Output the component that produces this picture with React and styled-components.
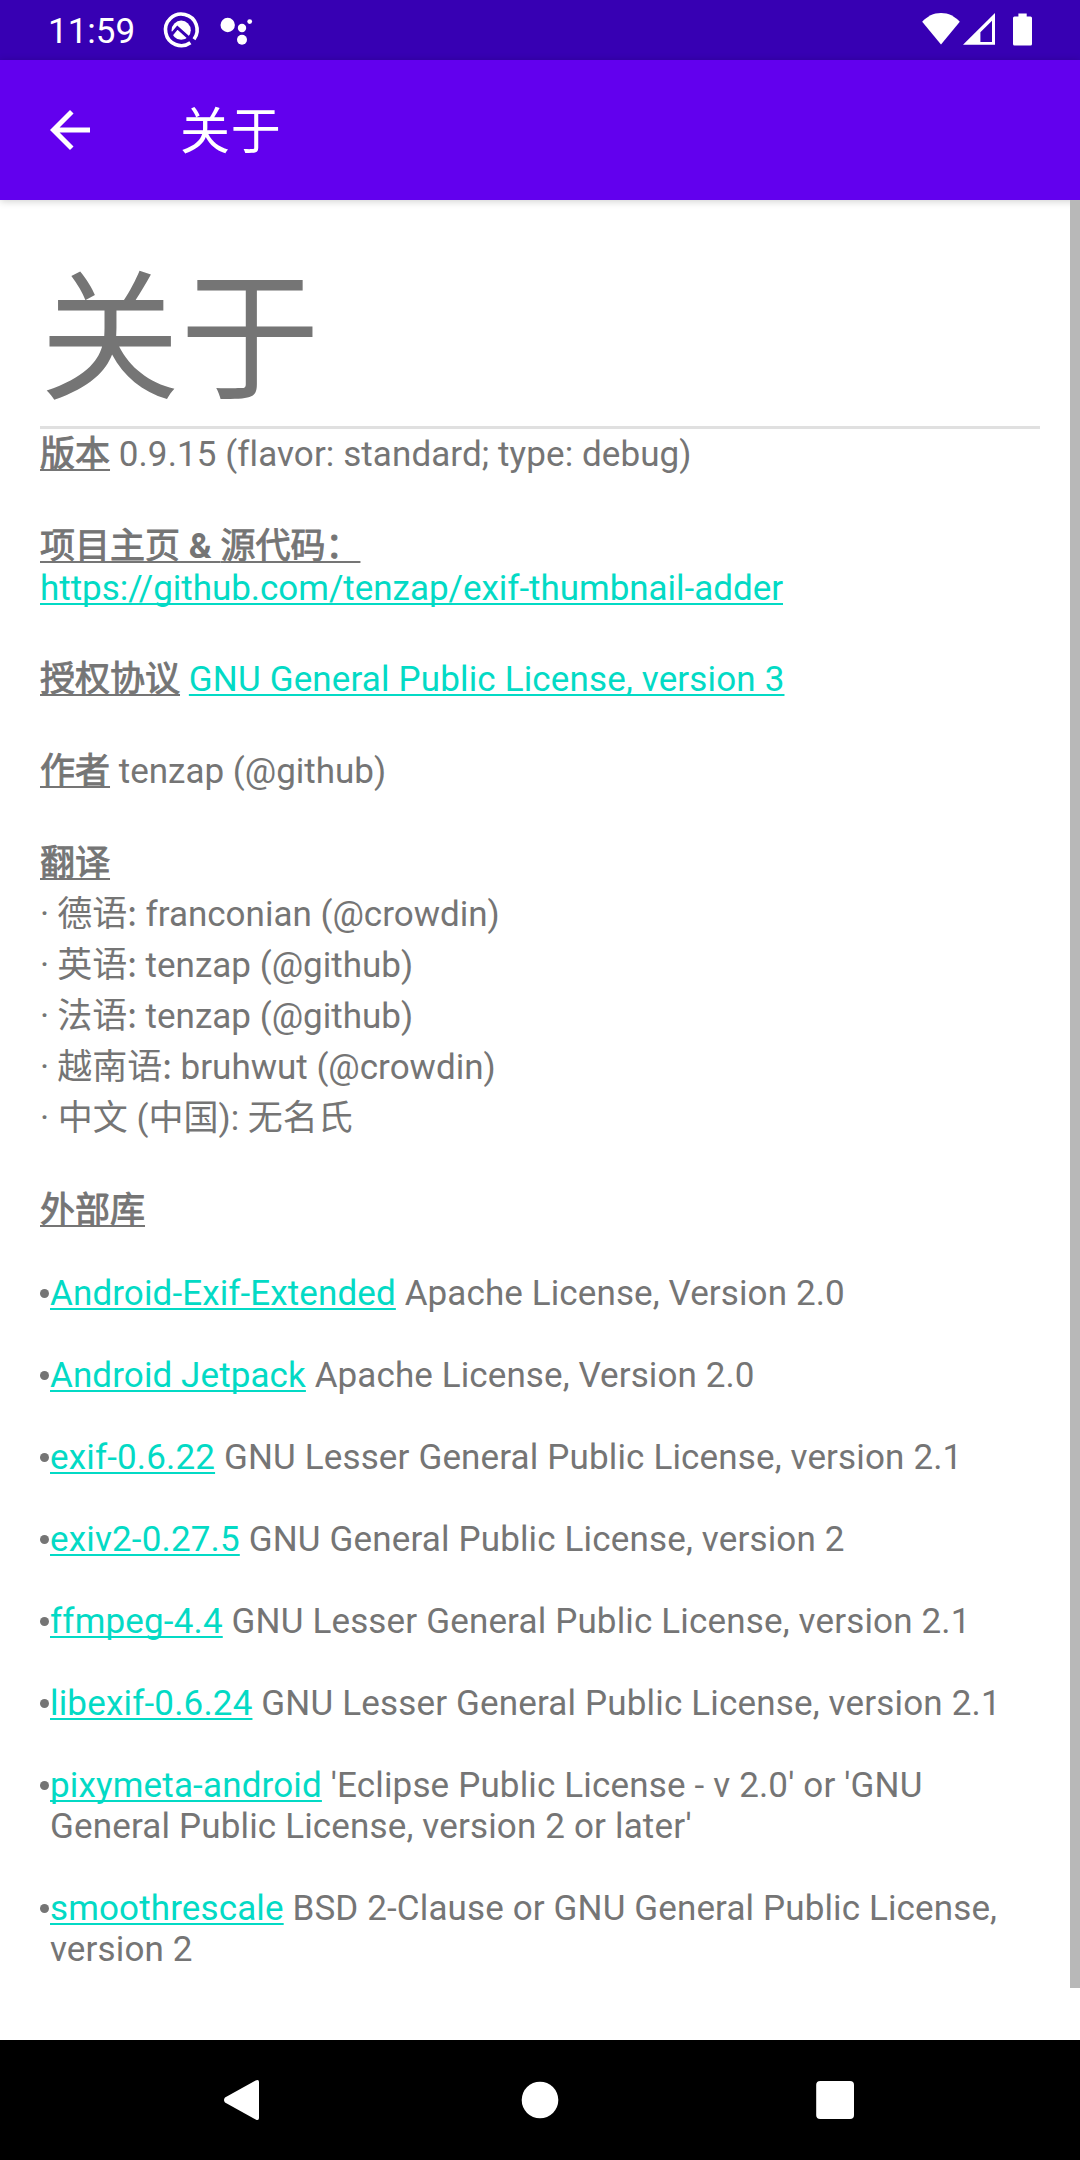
import React from "react";
import styled, { createGlobalStyle } from "styled-components";

const GlobalStyle = createGlobalStyle`
  *, *::before, *::after { box-sizing: border-box; }
  body { margin: 0; background: #fff; }
`;

const Screen = styled.div`
  width: 1080px;
  height: 2160px;
  display: flex;
  flex-direction: column;
  overflow: hidden;
  background: #fff;
  color: #757575;
  font-family: Roboto, "Noto Sans CJK SC", sans-serif;
`;

const StatusBar = styled.header`
  flex: none;
  height: 60px;
  display: flex;
  justify-content: space-between;
  padding: 0 47px 0 48px;
  background: #3700b3;
  color: #fff;
`;

const StatusGroup = styled.div`
  display: flex;
  align-items: center;
`;

const Clock = styled.span`
  width: 114px;
  padding-top: 3px;
  font-size: 35px;
  line-height: 60px;
`;

const Toolbar = styled.nav`
  flex: none;
  height: 140px;
  display: flex;
  align-items: center;
  gap: 80px;
  padding-left: 40px;
  background: #6200ee;
  color: #fff;
  box-shadow: 0 1px 8px rgba(0, 0, 0, 0.2);
`;

const ToolbarTitle = styled.h1`
  margin: 0;
  padding-top: 3px;
  font-size: 50px;
  line-height: 60px;
  font-weight: 400;
  letter-spacing: 0.8px;
`;

const Viewport = styled.main`
  flex: 1;
  display: flex;
  min-height: 0;
`;

const Content = styled.article`
  flex: 1;
  padding: 0 30px 0 40px;
  font-size: 35px;
  line-height: 41px;
`;

const ScrollThumb = styled.div`
  flex: none;
  width: 10px;
  height: 1788px;
  background: #b8b8b8;
`;

const PageTitle = styled.h2`
  margin: 0;
  height: 226px;
  padding-top: 47px;
  font-size: 140px;
  line-height: 186px;
  font-weight: 400;
`;

const Divider = styled.hr`
  margin: 0 0 -5px;
  height: 3px;
  border: 0;
  background: #e0e0e0;
`;

const Section = styled.section`
  margin-bottom: 41px;
`;

const Line = styled.div`
  height: ${(p) => (p.$tall ? "51px" : "41px")};
  padding-top: ${(p) => (p.$tall ? "10px" : "1px")};
  letter-spacing: ${(p) => p.$tracking || "0"};
`;

const Label = styled.b`
  font-weight: ${(p) => (p.$strong ? 700 : 400)};
  letter-spacing: 0;
  -webkit-text-stroke: ${(p) => (p.$strong ? "0" : "0.9px #757575")};
`;

const Underlined = styled.u`
  text-decoration: underline;
  text-decoration-thickness: 2px;
  text-underline-offset: 3px;
  text-decoration-skip-ink: none;
`;

const Link = styled(Underlined).attrs({ as: "a" })`
  color: #03dac5;
`;

const Cjk = styled.span`
  font-family: "Noto Sans CJK SC", sans-serif;
  line-height: 0;
  margin-left: -0.7px;
`;

const Libraries = styled.ul`
  list-style: none;
  margin: 0;
  padding: 0;
  display: flex;
  flex-direction: column;
  gap: 41px;
`;

const Library = styled.li`
  display: flex;
  gap: 1px;
  letter-spacing: ${(p) => p.$tracking};
`;

const LibraryText = styled.div`
  padding-top: 1px;
  margin-bottom: -1px;
`;

const Bullet = styled.span`
  flex: none;
  width: 9px;
  height: 9px;
  margin-top: 17px;
  border-radius: 50%;
  background: #757575;
`;

const NavigationBar = styled.footer`
  flex: none;
  height: 120px;
  display: flex;
  justify-content: space-between;
  align-items: center;
  padding: 0 215px;
  background: #000;
`;

const translators = [
  ["德语", "franconian (@crowdin)"],
  ["英语", "tenzap (@github)"],
  ["法语", "tenzap (@github)"],
  ["越南语", "bruhwut (@crowdin)"],
];

const libraries = [
  ["Android-Exif-Extended", "Apache License, Version 2.0", "0.11px"],
  ["Android Jetpack", "Apache License, Version 2.0", "0.1px"],
  ["exif-0.6.22", "GNU Lesser General Public License, version 2.1", "0.15px"],
  ["exiv2-0.27.5", "GNU General Public License, version 2", "0.16px"],
  ["ffmpeg-4.4", "GNU Lesser General Public License, version 2.1", "0.16px"],
  ["libexif-0.6.24", "GNU Lesser General Public License, version 2.1", "0.17px"],
  ["pixymeta-android", "'Eclipse Public License - v 2.0' or 'GNU General Public License, version 2 or later'", "0.16px"],
  ["smoothrescale", "BSD 2-Clause or GNU General Public License, version 2", "0.13px"],
];

function NotificationIcons() {
  return (
    <svg width="92" height="40" viewBox="162 10 92 40" fill="#fff">
      <path d="M190.4 42.8A15.8 15.8 0 1 1 194 39.3" fill="none" stroke="#fff" strokeWidth="3.6" />
      <circle cx="181.2" cy="30.2" r="9.6" />
      <path d="M170.8 35.4L177.4 27.6L193 41.6" fill="none" stroke="#3700b3" strokeWidth="3.1" />
      <circle cx="227.7" cy="25" r="7.2" />
      <circle cx="242" cy="28" r="4.2" />
      <circle cx="249.7" cy="21.6" r="2.4" />
      <circle cx="242" cy="39.7" r="5" />
    </svg>
  );
}

function SystemIcons() {
  return (
    <svg width="112" height="40" viewBox="921 10 112 40" fill="#fff">
      <path d="M941 44.6L922.2 21.8C927 16.4 933.5 13 941 13S955 16.4 959.8 21.8Z" />
      <path fillRule="evenodd" d="M963 44.8L995 13V44.8ZM980.4 42H992V20.7L980.4 32.2Z" />
      <path d="M1018.4 13.5H1026.7V16.6H1030.5Q1032 16.6 1032 18.1V44Q1032 45.5 1030.5 45.5H1014.5Q1013 45.5 1013 44V18.1Q1013 16.6 1014.5 16.6H1018.4Z" />
    </svg>
  );
}

function BackArrow() {
  return (
    <svg width="60" height="60" viewBox="0 0 24 24" fill="#fff">
      <path d="M20 11H7.83l5.59-5.59L12 4l-8 8 8 8 1.41-1.41L7.83 13H20v-2z" />
    </svg>
  );
}

export default function App() {
  return (
    <Screen lang="zh-CN">
      <GlobalStyle />
      <StatusBar>
        <StatusGroup>
          <Clock>11:59</Clock>
          <NotificationIcons />
        </StatusGroup>
        <StatusGroup>
          <SystemIcons />
        </StatusGroup>
      </StatusBar>
      <Toolbar>
        <BackArrow />
        <ToolbarTitle>关于</ToolbarTitle>
      </Toolbar>
      <Viewport>
        <Content>
          <PageTitle>关于</PageTitle>
          <Divider />
          <Section>
            <Line $tall $tracking="0.09px">
              <Underlined><Label>版本</Label></Underlined> 0.9.15 (flavor: standard; type: debug)
            </Line>
          </Section>
          <Section>
            <Line $tall>
              <Underlined>
                <Label>项目主页</Label>
                <Label $strong> &amp; </Label>
                <Label>源代码：</Label>
              </Underlined>
            </Line>
            <Line $tracking="-0.03px"><Link>https://github.com/tenzap/exif-thumbnail-adder</Link></Line>
          </Section>
          <Section>
            <Line $tall $tracking="0.15px">
              <Underlined><Label>授权协议</Label></Underlined> <Link>GNU General Public License, version 3</Link>
            </Line>
          </Section>
          <Section>
            <Line $tall><Underlined><Label>作者</Label></Underlined> tenzap (@github)</Line>
          </Section>
          <Section>
            <Line $tall><Underlined><Label>翻译</Label></Underlined></Line>
            {translators.map(([language, person]) => (
              <Line $tall key={language}>· <Cjk>{language}:</Cjk> {person}</Line>
            ))}
            <Line $tall>· 中文 (中国): 无名氏</Line>
          </Section>
          <Section>
            <Line $tall><Underlined><Label>外部库</Label></Underlined></Line>
          </Section>
          <Libraries>
            {libraries.map(([name, license, tracking]) => (
              <Library key={name} $tracking={tracking}>
                <Bullet />
                <LibraryText><Link>{name}</Link> {license}</LibraryText>
              </Library>
            ))}
          </Libraries>
        </Content>
        <ScrollThumb />
      </Viewport>
      <NavigationBar>
        <svg width="50" height="50" viewBox="215 2075 50 50" fill="#fff">
          <path d="M225 2097.4L255.6 2080.5Q259 2079 259 2082V2118Q259 2121 255.6 2119.5L225 2102.6Q223 2100 225 2097.4Z" />
        </svg>
        <svg width="50" height="50" viewBox="0 0 50 50" fill="#fff">
          <circle cx="25" cy="25" r="18.3" />
        </svg>
        <svg width="50" height="50" viewBox="5 0 50 50" fill="#fff">
          <rect x="6.2" y="6.1" width="37.8" height="37.8" rx="4" />
        </svg>
      </NavigationBar>
    </Screen>
  );
}
